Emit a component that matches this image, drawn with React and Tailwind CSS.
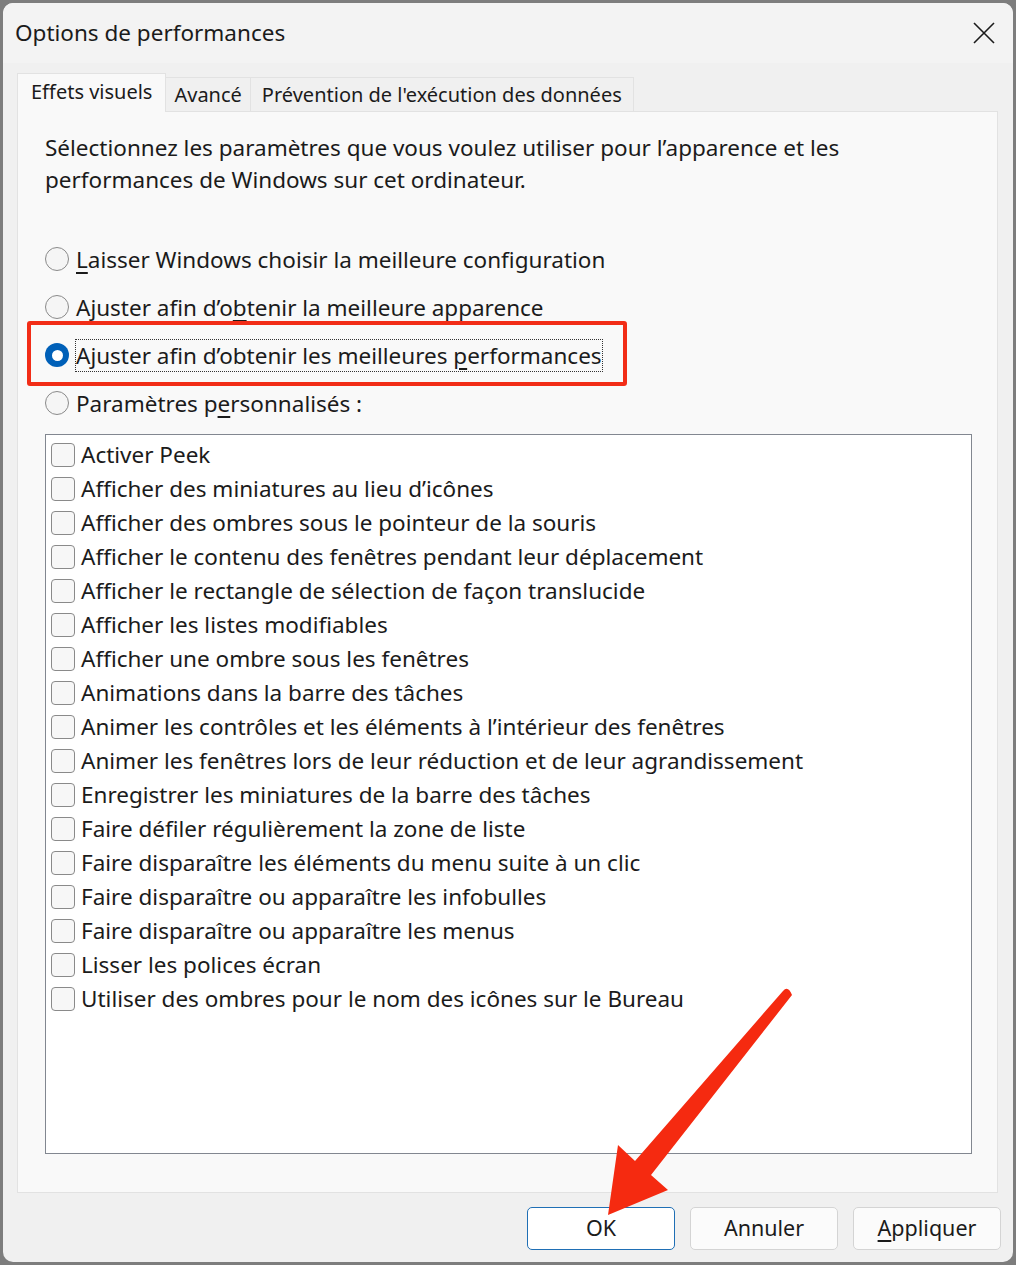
import React from 'react';

const FONT = { fontFamily: '"Noto Sans", "Open Sans", sans-serif' };

const RADIOS = [
  { pre: '', u: 'L', post: 'aisser Windows choisir la meilleure configuration' },
  { pre: 'Ajuster afin d’o', u: 'b', post: 'tenir la meilleure apparence' },
  { pre: 'Ajuster afin d’obtenir les meilleures ', u: 'p', post: 'erformances', checked: true },
  { pre: 'Paramètres p', u: 'e', post: 'rsonnalisés :' },
];

const OPTIONS = [
  'Activer Peek',
  'Afficher des miniatures au lieu d’icônes',
  'Afficher des ombres sous le pointeur de la souris',
  'Afficher le contenu des fenêtres pendant leur déplacement',
  'Afficher le rectangle de sélection de façon translucide',
  'Afficher les listes modifiables',
  'Afficher une ombre sous les fenêtres',
  'Animations dans la barre des tâches',
  'Animer les contrôles et les éléments à l’intérieur des fenêtres',
  'Animer les fenêtres lors de leur réduction et de leur agrandissement',
  'Enregistrer les miniatures de la barre des tâches',
  'Faire défiler régulièrement la zone de liste',
  'Faire disparaître les éléments du menu suite à un clic',
  'Faire disparaître ou apparaître les infobulles',
  'Faire disparaître ou apparaître les menus',
  'Lisser les polices écran',
  'Utiliser des ombres pour le nom des icônes sur le Bureau',
];

function Radio({ checked }) {
  if (checked) {
    return (
      <span className="w-[24px] h-[24px] rounded-full bg-[#0060b8] flex items-center justify-center shrink-0">
        <span className="w-[11px] h-[11px] rounded-full bg-white" />
      </span>
    );
  }
  return <span className="w-[24px] h-[24px] rounded-full border border-[#8a8a8a] bg-[#f5f5f5] shrink-0" />;
}

export default function App() {
  return (
    <div className="relative w-[1016px] h-[1265px] bg-[#7d7d7d] p-[3px] text-[#1b1b1b]" style={FONT}>
      <div className="w-full h-full rounded-[10px] bg-[#f0f0f0] flex flex-col overflow-hidden">
        {/* barre de titre */}
        <div className="h-[60px] bg-[#f3f3f3] flex items-center justify-between pl-[12px] pr-[18px]">
          <span className="text-[22.5px]">Options de performances</span>
          <svg width="22" height="22" viewBox="0 0 22 22">
            <path d="M1 1 L21 21 M21 1 L1 21" stroke="#1b1b1b" strokeWidth="1.6" fill="none" />
          </svg>
        </div>

        <div className="pl-[14px] pr-[12px] pt-[9px] flex flex-col">
          {/* onglets */}
          <div className="flex items-end h-[39px] relative z-10">
            <div className="h-[39px] px-[13px] bg-[#f9f9f9] border border-b-0 border-[#e2e2e2] flex items-center text-[20px] -mb-[1px] pb-[2px]">
              Effets visuels
            </div>
            <div className="h-[34px] px-[8px] bg-[#f0f0f0] border border-l-0 border-b-0 border-[#e2e2e2] flex items-center text-[20px]">
              Avancé
            </div>
            <div className="h-[34px] px-[11px] bg-[#f0f0f0] border border-l-0 border-b-0 border-[#e2e2e2] flex items-center text-[20px]">
              Prévention de l'exécution des données
            </div>
          </div>

          {/* panneau */}
          <div className="h-[1082px] mr-[3px] bg-[#f9f9f9] border border-[#e2e2e2] pl-[27px] pr-[25px] pt-[20px] flex flex-col">
            <p className="text-[22.5px] leading-[32px]">
              Sélectionnez les paramètres que vous voulez utiliser pour l’apparence et les
              <br />
              performances de Windows sur cet ordinateur.
            </p>

            <div className="mt-[39px] flex flex-col">
              {RADIOS.map((r, i) => (
                <div key={i} className="h-[48px] flex items-center gap-[7px] text-[22.5px]">
                  <Radio checked={r.checked} />
                  <span className={r.checked ? 'outline outline-1 outline-dotted outline-[#333] leading-[31px]' : 'leading-[31px]'}>
                    {r.pre}
                    <span className="underline underline-offset-[4px]">{r.u}</span>
                    {r.post}
                  </span>
                </div>
              ))}
            </div>

            <div className="mt-[7px] h-[720px] bg-white border border-[#828790] pt-[3px] pl-[5px]">
              {OPTIONS.map((o) => (
                <div key={o} className="h-[34px] flex items-center gap-[6px] text-[22.5px]">
                  <span className="w-[24px] h-[24px] rounded-[4px] border border-[#8a8a8a] bg-[#f7f7f7] shrink-0" />
                  <span>{o}</span>
                </div>
              ))}
            </div>
          </div>

          {/* boutons */}
          <div className="flex justify-end gap-[15px] pt-[14px]">
            <button className="w-[148px] h-[43px] rounded-[5px] border border-[#1f6fb5] bg-white text-[21.5px]">OK</button>
            <button className="w-[148px] h-[43px] rounded-[5px] border border-[#d4d4d4] bg-[#fbfbfb] text-[21.5px]">Annuler</button>
            <button className="w-[148px] h-[43px] rounded-[5px] border border-[#d4d4d4] bg-[#fbfbfb] text-[21.5px]">
              <span className="underline underline-offset-[4px]">A</span>ppliquer
            </button>
          </div>
        </div>
      </div>

      {/* cadre rouge autour de l'option choisie */}
      <div className="absolute left-[27px] top-[321px] w-[600px] h-[65px] border-[4px] border-[#f22d17] rounded-[3px]" />

      {/* flèche rouge */}
      <svg className="absolute left-0 top-0 pointer-events-none" width="1016" height="1265">
        <path d="M783 991 Q788 985 792 995 L651 1175 L668 1190 L608 1215 L618 1145 L635 1161 Z" fill="#f52a10" />
      </svg>
    </div>
  );
}
